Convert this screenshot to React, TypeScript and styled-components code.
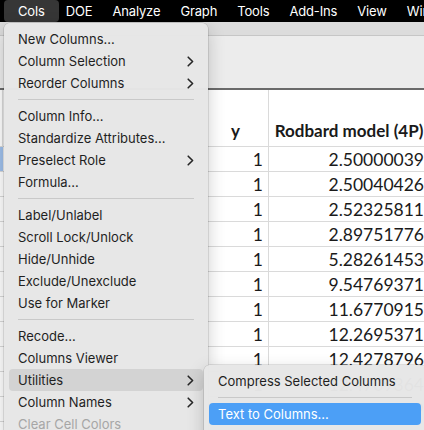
import { Fragment } from 'react';
import styled, { createGlobalStyle } from 'styled-components';

const GlobalStyle = createGlobalStyle`
  html, body {
    margin: 0;
    padding: 0;
    background: #ffffff;
  }
  body {
    font-family: Inter, "Noto Sans", sans-serif;
    -webkit-font-smoothing: antialiased;
  }
`;

const Screen = styled.div`
  position: relative;
  width: 424px;
  height: 430px;
  overflow: hidden;
  background: #ffffff;
`;

const MenuBar = styled.div`
  display: flex;
  align-items: stretch;
  height: 22px;
  background: #000000;
  padding-left: 4px;
`;

const BarItem = styled.div<{ $open?: boolean }>`
  display: flex;
  align-items: center;
  padding: 0 ${(p) => (p.$open ? 14 : 10)}px;
  margin-right: ${(p) => (p.$open ? -3 : 0)}px;
  border-radius: 4px;
  background: ${(p) => (p.$open ? '#363636' : 'transparent')};
  color: #ffffff;
  font-size: 13px;
  font-weight: 400;
  letter-spacing: -0.15px;
  white-space: nowrap;
`;

const TitleStrip = styled.div`
  height: 13px;
  background: #dcdcdc;
  border-bottom: 1px solid #c6c6c6;
`;

const Toolbar = styled.div`
  height: 52px;
  background: #ececec;
  border-bottom: 2px solid #6a6a6a;
`;

const Grid = styled.div`
  display: grid;
  grid-template-columns: 3px 200px 66px 160px;
`;

const Cell = styled.div<{ $align?: 'left' | 'right' | 'center'; $head?: boolean; $selected?: boolean; $last?: boolean }>`
  display: flex;
  align-items: ${(p) => (p.$head ? 'flex-end' : 'center')};
  justify-content: ${(p) =>
    p.$align === 'right' ? 'flex-end' : p.$align === 'center' ? 'center' : 'flex-start'};
  height: ${(p) => (p.$head ? 51 : 24)}px;
  padding: ${(p) => (p.$head ? '0 0 5px' : '0 5px 0 0')};
  box-sizing: content-box;
  border-bottom: 1px solid #dadada;
  border-right: ${(p) => (p.$last ? 'none' : '1px solid #dadada')};
  background: ${(p) => (p.$selected ? '#9fc0ec' : '#ffffff')};
  font-family: Lato, "Open Sans", sans-serif;
  font-size: ${(p) => (p.$head ? 17 : 17.5)}px;
  font-weight: ${(p) => (p.$head ? 700 : 400)};
  color: #1a1a1a;
  white-space: nowrap;
  overflow: hidden;
`;

const Menu = styled.div<{ $top: number; $left: number; $width: number }>`
  position: absolute;
  top: ${(p) => p.$top}px;
  left: ${(p) => p.$left}px;
  width: ${(p) => p.$width}px;
  box-sizing: border-box;
  padding: 5px;
  border-radius: 6px;
  background: rgba(231, 231, 231, 0.98);
  box-shadow: 0 0 0 0.5px rgba(0, 0, 0, 0.2), 0 6px 18px rgba(0, 0, 0, 0.2);
`;

const Item = styled.div<{ $state?: 'hover' | 'active' | 'disabled' }>`
  display: flex;
  align-items: center;
  justify-content: space-between;
  height: 22px;
  padding: 0 9px;
  border-radius: 4px;
  font-size: 13px;
  white-space: nowrap;
  color: ${(p) => (p.$state === 'active' ? '#ffffff' : p.$state === 'disabled' ? '#a6a6a6' : '#1f1f1f')};
  background: ${(p) =>
    p.$state === 'active' ? '#4c9ff6' : p.$state === 'hover' ? '#d3d3d3' : 'transparent'};
`;

const Separator = styled.div`
  height: 1px;
  margin: 5px 9px;
  background: #c9c9c9;
`;

const Chevron = () => (
  <svg width="7" height="11" viewBox="0 0 7 11" fill="none">
    <path d="M1.2 1.2 L5.6 5.5 L1.2 9.8" stroke="#262626" strokeWidth="1.6" strokeLinecap="round" strokeLinejoin="round" />
  </svg>
);

type Entry = { label: string; sub?: boolean; state?: 'hover' | 'active' | 'disabled' } | 'sep';

const colsMenu: Entry[] = [
  { label: 'New Columns...' },
  { label: 'Column Selection', sub: true },
  { label: 'Reorder Columns', sub: true },
  'sep',
  { label: 'Column Info...' },
  { label: 'Standardize Attributes...' },
  { label: 'Preselect Role', sub: true },
  { label: 'Formula...' },
  'sep',
  { label: 'Label/Unlabel' },
  { label: 'Scroll Lock/Unlock' },
  { label: 'Hide/Unhide' },
  { label: 'Exclude/Unexclude' },
  { label: 'Use for Marker' },
  'sep',
  { label: 'Recode...' },
  { label: 'Columns Viewer' },
  { label: 'Utilities', sub: true, state: 'hover' },
  { label: 'Column Names', sub: true },
  { label: 'Clear Cell Colors', state: 'disabled' },
];

const utilitiesMenu: Entry[] = [
  { label: 'Compress Selected Columns' },
  'sep',
  { label: 'Text to Columns...', state: 'active' },
  { label: 'Stack Columns...' },
];

const values = [
  '2.50000039',
  '2.50040426',
  '2.52325811',
  '2.89751776',
  '5.28261453',
  '9.54769371',
  '11.6770915',
  '12.2695371',
  '12.4278796',
  '12.4709364',
  '12.4904119',
];

const MenuList = ({ entries }: { entries: Entry[] }) => (
  <>
    {entries.map((e, i) =>
      e === 'sep' ? (
        <Separator key={i} />
      ) : (
        <Item key={i} $state={e.state}>
          <span>{e.label}</span>
          {e.sub && <Chevron />}
        </Item>
      )
    )}
  </>
);

export default function App() {
  return (
    <Screen>
      <GlobalStyle />
      <MenuBar>
        <BarItem $open>Cols</BarItem>
        <BarItem>DOE</BarItem>
        <BarItem>Analyze</BarItem>
        <BarItem>Graph</BarItem>
        <BarItem>Tools</BarItem>
        <BarItem>Add-Ins</BarItem>
        <BarItem>View</BarItem>
        <BarItem>Window</BarItem>
      </MenuBar>
      <TitleStrip />
      <Toolbar />
      <Grid>
        <Cell $head />
        <Cell $head />
        <Cell $head $align="center">y</Cell>
        <Cell $head $align="center" $last>
          Rodbard model (4P)
        </Cell>
        {values.map((v, i) => (
          <Fragment key={i}>
            <Cell $selected={i === 0} />
            <Cell />
            <Cell $align="right">1</Cell>
            <Cell $align="right" $last>
              {v}
            </Cell>
          </Fragment>
        ))}
      </Grid>
      <Menu $top={23} $left={4} $width={204}>
        <MenuList entries={colsMenu} />
      </Menu>
      <Menu $top={365} $left={204} $width={222}>
        <MenuList entries={utilitiesMenu} />
      </Menu>
    </Screen>
  );
}
